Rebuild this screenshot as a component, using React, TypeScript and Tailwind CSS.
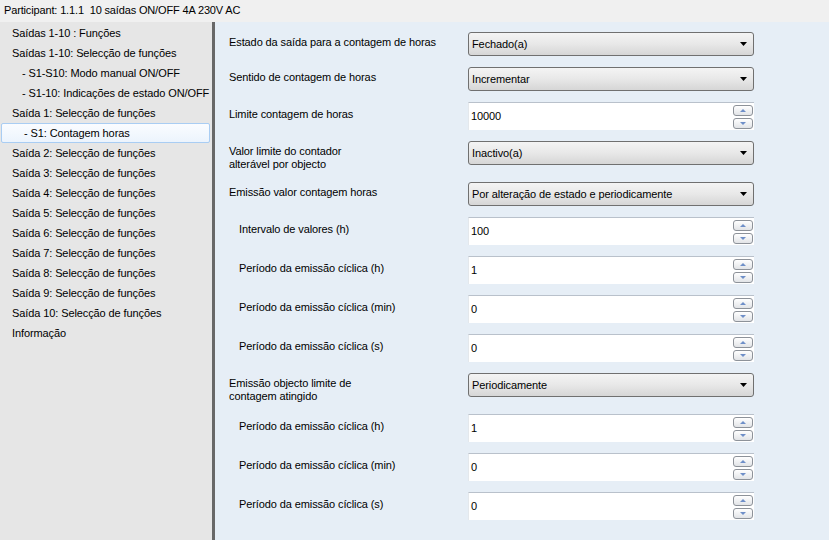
import React from "react";

type Row = {
  label: string[];
  indent?: boolean;
  type: "select" | "spin";
  value: string;
};

const rows: Row[] = [
  { label: ["Estado da saída para a contagem de horas"], type: "select", value: "Fechado(a)" },
  { label: ["Sentido de contagem de horas"], type: "select", value: "Incrementar" },
  { label: ["Limite contagem de horas"], type: "spin", value: "10000" },
  { label: ["Valor limite do contador", "alterável por objecto"], type: "select", value: "Inactivo(a)" },
  { label: ["Emissão valor contagem horas"], type: "select", value: "Por alteração de estado e periodicamente" },
  { label: ["Intervalo de valores (h)"], indent: true, type: "spin", value: "100" },
  { label: ["Período da emissão cíclica (h)"], indent: true, type: "spin", value: "1" },
  { label: ["Período da emissão cíclica (min)"], indent: true, type: "spin", value: "0" },
  { label: ["Período da emissão cíclica (s)"], indent: true, type: "spin", value: "0" },
  { label: ["Emissão objecto limite de", "contagem atingido"], type: "select", value: "Periodicamente" },
  { label: ["Período da emissão cíclica (h)"], indent: true, type: "spin", value: "1" },
  { label: ["Período da emissão cíclica (min)"], indent: true, type: "spin", value: "0" },
  { label: ["Período da emissão cíclica (s)"], indent: true, type: "spin", value: "0" },
];

const nav: { text: string; sub?: boolean; selected?: boolean }[] = [
  { text: "Saídas 1-10 : Funções" },
  { text: "Saídas 1-10: Selecção de funções" },
  { text: "- S1-S10: Modo manual ON/OFF", sub: true },
  { text: "- S1-10: Indicações de estado ON/OFF", sub: true },
  { text: "Saída 1: Selecção de funções" },
  { text: "- S1: Contagem horas", sub: true, selected: true },
  { text: "Saída 2: Selecção de funções" },
  { text: "Saída 3: Selecção de funções" },
  { text: "Saída 4: Selecção de funções" },
  { text: "Saída 5: Selecção de funções" },
  { text: "Saída 6: Selecção de funções" },
  { text: "Saída 7: Selecção de funções" },
  { text: "Saída 8: Selecção de funções" },
  { text: "Saída 9: Selecção de funções" },
  { text: "Saída 10: Selecção de funções" },
  { text: "Informação" },
];

function SpinButton({ up }: { up?: boolean }) {
  return (
    <div className="w-[20px] h-[11px] rounded-[3px] border border-[#8d9299] bg-gradient-to-b from-[#ffffff] to-[#e2e4e7] flex items-center justify-center">
      <svg width="6" height="3" viewBox="0 0 6 3">
        {up ? (
          <polygon points="0,3 6,3 3,0" fill="#6f8fc8" />
        ) : (
          <polygon points="0,0 6,0 3,3" fill="#6f8fc8" />
        )}
      </svg>
    </div>
  );
}

function Select({ value }: { value: string }) {
  return (
    <div className="w-[286px] h-[24px] rounded-[3px] border border-[#707070] bg-gradient-to-b from-[#f4f4f4] via-[#e8e8e8] to-[#d6d6d6] flex items-center pl-[3px] pr-[6px]">
      <span className="flex-1 text-black">{value}</span>
      <svg width="7" height="4" viewBox="0 0 7 4">
        <polygon points="0,0 7,0 3.5,4" fill="#000" />
      </svg>
    </div>
  );
}

function Spin({ value }: { value: string }) {
  return (
    <div className="w-[286px] h-[28px] bg-white border-t border-t-[#b9c1cb] border-l border-l-[#e4e8ec] flex items-center pl-[2px] pr-[1px]">
      <span className="flex-1 text-black">{value}</span>
      <div className="flex flex-col gap-[2px]">
        <SpinButton up />
        <SpinButton />
      </div>
    </div>
  );
}

export default function App() {
  return (
    <div
      className="w-[829px] h-[540px] overflow-hidden flex flex-col text-[11px] leading-[13px] text-black tracking-[-0.1px]"
      style={{ fontFamily: '"Liberation Sans", Arial, sans-serif' }}
    >
      <div className="h-[22px] shrink-0 bg-[#f0f0f0] pl-[4px] pt-[3px] whitespace-pre leading-[14px] text-[11px] tracking-[-0.15px]">
        Participant: 1.1.1  10 saídas ON/OFF 4A 230V AC
      </div>
      <div className="flex flex-1 min-h-0">
        <div className="w-[212px] shrink-0 bg-[#e6e6e6] pt-px">
          {nav.map((n, i) => (
            <div
              key={i}
              className={
                "h-[20px] flex items-center whitespace-nowrap " +
                (n.sub ? "pl-[22px] " : "pl-[12px] ") +
                (n.selected
                  ? "ml-px mr-[2px] rounded-[2px] border border-[#a9cdf3] bg-gradient-to-b from-[#fafcff] to-[#ecf4fd] pl-[21px]"
                  : "")
              }
            >
              {n.text}
            </div>
          ))}
        </div>
        <div className="w-[3px] shrink-0 bg-[#686868]" />
        <div className="flex-1 bg-[#e6eef6] pt-[10px] pl-[14px] flex flex-col gap-[11px]">
          {rows.map((r, i) => {
            const multi = r.label.length > 1;
            return (
              <div key={i} className={"flex " + (multi ? "items-start" : "items-center")}>
                <div
                  className={
                    "w-[239px] shrink-0 " +
                    (r.indent ? "pl-[10px] " : "") +
                    (multi ? "pt-[4px] leading-[13px]" : "pb-[3px]")
                  }
                >
                  {r.label.map((l, j) => (
                    <div key={j}>{l}</div>
                  ))}
                </div>
                {r.type === "select" ? <Select value={r.value} /> : <Spin value={r.value} />}
              </div>
            );
          })}
        </div>
      </div>
    </div>
  );
}
